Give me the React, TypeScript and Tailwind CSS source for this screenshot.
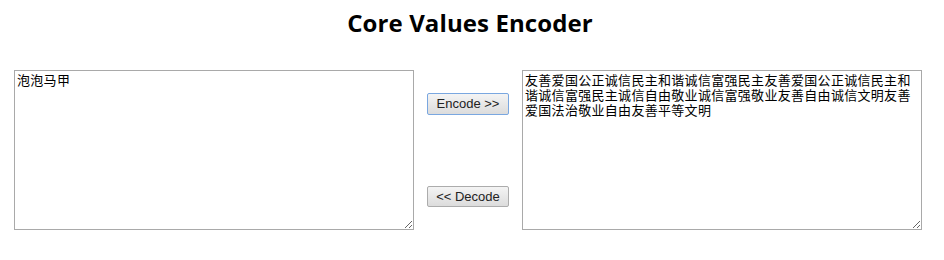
export default function App() {
  const encoded =
    "友善爱国公正诚信民主和谐诚信富强民主友善爱国公正诚信民主和谐诚信富强民主诚信自由敬业诚信富强敬业友善自由诚信文明友善爱国法治敬业自由友善平等文明";

  return (
    <div className="w-[944px] h-[260px] bg-white text-black">
      <h1 className="pt-[7px] pr-[4px] h-[70px] text-center text-[24px] font-bold leading-[32px] font-['Open_Sans',sans-serif] tracking-[0.1px]">
        Core Values Encoder
      </h1>

      <div className="flex pl-[14px]">
        <textarea
          defaultValue="泡泡马甲"
          className="w-[400px] h-[160px] border border-[#a9a9a9] px-[2px] pt-[2px] text-[13px] leading-[15px] tracking-[0.3px] font-['Liberation_Sans','Noto_Sans_CJK_SC',sans-serif] resize"
        />

        {/* Encode / Decode */}
        <div className="w-[108px] flex flex-col items-center pt-[23px] gap-[71px]">
          <button className="w-[82px] h-[22px] border border-[#7aa7e0] rounded-[2px] bg-gradient-to-b from-[#f4f4f4] to-[#dcdcdc] text-[13px] text-[#222] font-['Liberation_Sans',sans-serif]">
            Encode &gt;&gt;
          </button>
          <button className="w-[82px] h-[21px] border border-[#acacac] rounded-[2px] bg-gradient-to-b from-[#f4f4f4] to-[#dcdcdc] text-[13px] text-[#222] font-['Liberation_Sans',sans-serif]">
            &lt;&lt; Decode
          </button>
        </div>

        <textarea
          defaultValue={encoded}
          className="w-[400px] h-[160px] border border-[#a9a9a9] px-[2px] pt-[2px] text-[13px] leading-[15px] tracking-[0.3px] font-['Liberation_Sans','Noto_Sans_CJK_SC',sans-serif] resize"
        />
      </div>
    </div>
  );
}
